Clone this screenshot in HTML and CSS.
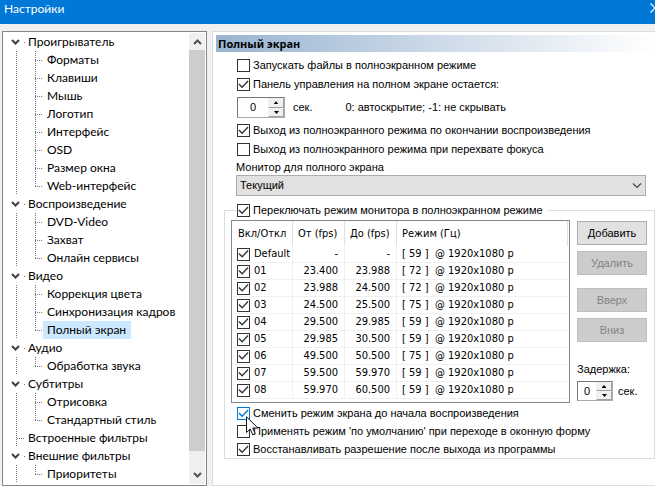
FILE: index.html
```html
<!DOCTYPE html>
<html lang="ru">
<head>
<meta charset="utf-8">
<title>Настройки</title>
<link rel="stylesheet" href="styles.css">
</head>
<body>
<svg class="defs" aria-hidden="true">
  <symbol id="chev" viewBox="0 0 9 6"><path d="M1 1l3.500 3.500L8 1" fill="none" stroke="currentColor" stroke-width="2"/></symbol>
</svg>
<header class="titlebar">
  <span>Настройки</span>
  <button class="close" aria-label="Закрыть"><svg width="10" height="10" viewBox="0 0 10 10"><path d="M.5.5l9 9M9.500.5l-9 9" stroke="#fff" stroke-width="1.200"/></svg></button>
</header>
<main class="window">
  <nav class="tree">
    <ul class="roots">
      <li><a href="#" class="root"><svg class="arrow"><use href="#chev"/></svg>Проигрыватель</a>
        <ul class="kids">
          <li><a href="#">Форматы</a></li><li><a href="#">Клавиши</a></li><li><a href="#">Мышь</a></li><li><a href="#">Логотип</a></li><li><a href="#">Интерфейс</a></li><li><a href="#">OSD</a></li><li><a href="#">Размер окна</a></li><li><a href="#">Web-интерфейс</a></li>
        </ul></li>
      <li><a href="#" class="root"><svg class="arrow"><use href="#chev"/></svg>Воспроизведение</a>
        <ul class="kids">
          <li><a href="#">DVD-Video</a></li><li><a href="#">Захват</a></li><li><a href="#">Онлайн сервисы</a></li>
        </ul></li>
      <li><a href="#" class="root"><svg class="arrow"><use href="#chev"/></svg>Видео</a>
        <ul class="kids">
          <li><a href="#">Коррекция цвета</a></li><li><a href="#">Синхронизация кадров</a></li><li><a href="#" class="selected">Полный экран</a></li>
        </ul></li>
      <li><a href="#" class="root"><svg class="arrow"><use href="#chev"/></svg>Аудио</a>
        <ul class="kids"><li><a href="#">Обработка звука</a></li></ul></li>
      <li><a href="#" class="root"><svg class="arrow"><use href="#chev"/></svg>Субтитры</a>
        <ul class="kids"><li><a href="#">Отрисовка</a></li><li><a href="#">Стандартный стиль</a></li></ul></li>
      <li class="leaf"><a href="#" class="root">Встроенные фильтры</a></li>
      <li><a href="#" class="root"><svg class="arrow"><use href="#chev"/></svg>Внешние фильтры</a>
        <ul class="kids"><li><a href="#">Приоритеты</a></li></ul></li>
    </ul>
    <div class="scroll" aria-hidden="true">
      <span class="scroll-end"><svg class="up"><use href="#chev"/></svg></span>
      <span class="thumb"></span>
      <span class="scroll-end low"><svg><use href="#chev"/></svg></span>
    </div>
  </nav>

  <section class="panel">
    <h1>Полный экран</h1>
    <div class="options">
      <label class="check"><input type="checkbox">Запускать файлы в полноэкранном режиме</label>
      <label class="check"><input type="checkbox" checked>Панель управления на полном экране остается:</label>
      <div class="hide-row">
        <span class="spin wide"><input id="hide" type="text" value="0"><span class="steps"><button aria-label="Больше"></button><button class="down" aria-label="Меньше"></button></span></span>
        <label for="hide">сек.</label>
        <span class="hint">0: автоскрытие; -1: не скрывать</span>
      </div>
      <label class="check"><input type="checkbox" checked>Выход из полноэкранного режима по окончании воспроизведения</label>
      <label class="check"><input type="checkbox">Выход из полноэкранного режима при перехвате фокуса</label>
      <label class="caption" for="monitor">Монитор для полного экрана</label>
      <div class="select"><select id="monitor"><option>Текущий</option></select><svg viewBox="0 0 10 6"><path d="M1 .5l4 4 4-4" fill="none" stroke="#444" stroke-width="1.200"/></svg></div>
    </div>
    <fieldset>
      <legend><label class="check"><input type="checkbox" checked>Переключать режим монитора в полноэкранном режиме</label></legend>
      <div class="modes">
        <div class="list">
          <table>
            <thead><tr><th>Вкл/Откл</th><th>От (fps)</th><th>До (fps)</th><th>Режим (Гц)</th></tr></thead>
            <tbody>
              <tr><td><label class="check"><input type="checkbox" checked>Default</label></td><td>-</td><td>-</td><td><span class="hz">[ 59 ]</span>@ 1920x1080 p</td></tr>
              <tr><td><label class="check"><input type="checkbox" checked>01</label></td><td>23.400</td><td>23.988</td><td><span class="hz">[ 72 ]</span>@ 1920x1080 p</td></tr>
              <tr><td><label class="check"><input type="checkbox" checked>02</label></td><td>23.988</td><td>24.500</td><td><span class="hz">[ 72 ]</span>@ 1920x1080 p</td></tr>
              <tr><td><label class="check"><input type="checkbox" checked>03</label></td><td>24.500</td><td>25.500</td><td><span class="hz">[ 75 ]</span>@ 1920x1080 p</td></tr>
              <tr><td><label class="check"><input type="checkbox" checked>04</label></td><td>29.500</td><td>29.985</td><td><span class="hz">[ 59 ]</span>@ 1920x1080 p</td></tr>
              <tr><td><label class="check"><input type="checkbox" checked>05</label></td><td>29.985</td><td>30.500</td><td><span class="hz">[ 59 ]</span>@ 1920x1080 p</td></tr>
              <tr><td><label class="check"><input type="checkbox" checked>06</label></td><td>49.500</td><td>50.500</td><td><span class="hz">[ 75 ]</span>@ 1920x1080 p</td></tr>
              <tr><td><label class="check"><input type="checkbox" checked>07</label></td><td>59.500</td><td>59.970</td><td><span class="hz">[ 59 ]</span>@ 1920x1080 p</td></tr>
              <tr><td><label class="check"><input type="checkbox" checked>08</label></td><td>59.970</td><td>60.500</td><td><span class="hz">[ 59 ]</span>@ 1920x1080 p</td></tr>
            </tbody>
          </table>
        </div>
        <div class="side">
          <div class="pair"><button class="btn">Добавить</button><button class="btn" disabled>Удалить</button></div>
          <div class="pair"><button class="btn" disabled>Вверх</button><button class="btn" disabled>Вниз</button></div>
          <div class="delay">
            <label for="delay">Задержка:</label>
            <div class="delay-row"><span class="spin"><input id="delay" type="text" value="0"><span class="steps"><button aria-label="Больше"></button><button class="down" aria-label="Меньше"></button></span></span>сек.</div>
          </div>
        </div>
      </div>
      <div class="after">
        <label class="check hot"><input type="checkbox" checked>Сменить режим экрана до начала воспроизведения
          <svg class="cursor" viewBox="0 0 13 20"><path d="M.5.8v15.700l3.700-3.500 2.500 5.800 2.500-1.100-2.500-5.700h5.200z" fill="#fff" stroke="#111"/></svg></label>
        <label class="check"><input type="checkbox">Применять режим 'по умолчанию' при переходе в оконную форму</label>
        <label class="check"><input type="checkbox" checked>Восстанавливать разрешение после выхода из программы</label>
      </div>
    </fieldset>
  </section>
</main>
</body>
</html>
```

FILE: styles.css
```css
* { box-sizing: border-box; }
body {
  margin: 0;
  height: 100vh;
  display: flex;
  flex-direction: column;
  overflow: hidden;
  background: #f0f0f0;
  color: #000;
  font: 11px/15px "Liberation Sans", sans-serif;
  white-space: nowrap;
}
button, input, select { font: inherit; color: inherit; margin: 0; padding: 0; }
a { color: inherit; text-decoration: none; }
ul { list-style: none; margin: 0; padding: 0; }
.defs { position: absolute; width: 0; height: 0; }

.titlebar {
  flex: none;
  display: flex;
  justify-content: space-between;
  height: 24px;
  padding-left: 4px;
  background: #0078d7;
  color: #fff;
  font: 12px/18px Lato, sans-serif;
}
.close { height: 15px; margin-right: -5px; border: 0; background: none; }
.close svg { display: block; }

.window { flex: 1; min-height: 0; display: flex; gap: 5px; padding: 7px 0 0 2px; }

.tree {
  flex: none;
  width: 205px;
  display: flex;
  justify-content: space-between;
  padding: 1px;
  border: 1px solid #828790;
  background: #fff;
  font: 12px/18px Lato, sans-serif;
  overflow: hidden;
}
.roots { padding-left: 7px; }
.roots > li {
  background: repeating-linear-gradient(#777 0 1px, transparent 1px 2px) 5px 18px / 1px 100% no-repeat;
}
.roots > .leaf { background-position: 5px 0; }
.root { display: flex; align-items: center; height: 18px; padding-left: 17px; }
.root::before {
  content: "";
  width: 1px;
  height: 1px;
  margin-right: 3px;
  background: #777;
}
.leaf .root { padding-left: 6px; }
.leaf .root::before {
  width: 8px;
  background: repeating-linear-gradient(90deg, #777 0 1px, transparent 1px 2px);
}
.arrow { order: -1; width: 9px; height: 6px; margin: 0 4px 0 -17px; color: #404040; }
.kids { padding-left: 24px; }
.kids li {
  display: flex;
  align-items: center;
  height: 18px;
  background: repeating-linear-gradient(#777 0 1px, transparent 1px 2px) 0 0 / 1px 100% no-repeat;
}
.kids li:last-child { background-size: 1px 10px; }
.kids li::before {
  content: "";
  width: 8px;
  height: 1px;
  background: repeating-linear-gradient(90deg, #777 0 1px, transparent 1px 2px);
}
.kids a { padding: 0 5px 0 4px; }
.kids .selected { background: #cce8ff; }

.scroll { display: flex; flex-direction: column; width: 16px; background: #f0f0f0; }
.scroll-end { height: 17px; display: flex; align-items: center; justify-content: center; color: #505050; }
.scroll-end.low { height: 33px; padding-top: 21px; align-items: flex-start; }
.scroll-end svg { width: 9px; height: 6px; }
.scroll .up { transform: rotate(180deg); }
.thumb { flex: 1; background: #cdcdcd; }

.panel {
  flex: 1;
  min-width: 0;
  border: solid #dcdcdc;
  border-width: 1px 0 1px 1px;
  padding-top: 3px;
  background: #fff;
}
h1 {
  margin: 0 0 4px 3px;
  padding-left: 2px;
  background: linear-gradient(90deg, #99b4d1, #fff);
  font: bold 11px/17px "Noto Sans", sans-serif;
}
.options { display: flex; flex-direction: column; padding: 0 9px 0 23px; }
.check { display: flex; align-items: center; gap: 3px; height: 19px; margin-left: 1px; }
input[type=checkbox] {
  appearance: none;
  flex: none;
  width: 13px;
  height: 13px;
  border: 1px solid #333;
  background: #fff;
  color: #333;
}
input[type=checkbox]:checked::before {
  content: "";
  display: block;
  width: 11px;
  height: 11px;
  background: currentColor;
  clip-path: polygon(4% 50%, 13% 41%, 38% 66%, 87% 14%, 96% 23%, 38% 84%);
}
.hide-row { display: flex; align-items: center; height: 21px; margin: 3px 1px; }
.hide-row label { margin-left: 8px; }
.hint { margin-left: 33px; }
.spin {
  display: flex;
  width: 36px;
  height: 20px;
  border: 1px solid;
  border-color: #787878 #aaa #aaa #787878;
  background: #fff;
}
.spin.wide { width: 48px; height: 21px; }
.spin input { flex: 1; min-width: 0; border: 0; background: none; text-align: center; }
.steps { display: flex; flex-direction: column; width: 16px; background: #f0f0f0; }
.steps button {
  flex: 1;
  display: flex;
  align-items: center;
  justify-content: center;
  border: 1px solid;
  border-color: #f0f0f0 #a0a0a0 #a0a0a0 #f0f0f0;
  background: #f0f0f0;
}
.steps button::before {
  content: "";
  width: 5px;
  height: 3px;
  background: #000;
  clip-path: polygon(50% 0, 100% 100%, 0 100%);
}
.steps .down::before { transform: rotate(180deg); }
.caption { height: 16px; line-height: 16px; }
.select { position: relative; }
.select select {
  appearance: none;
  display: block;
  width: 100%;
  height: 21px;
  padding: 0 3px;
  border: 1px solid #adadad;
  border-radius: 0;
  background: #e1e1e1;
}
.select svg { position: absolute; right: 4px; top: 8px; width: 10px; height: 6px; pointer-events: none; }

fieldset {
  min-width: 0;
  margin: 8px 0 0 11px;
  padding: 3px 6px 0;
  border: 1px solid #dcdcdc;
}
legend { margin-left: 5px; padding: 0 5px 0 0; }
legend .check { height: 13px; }
.modes { display: flex; gap: 7px; }
.list { flex: 1; min-width: 0; height: 183px; padding: 0 1px; border: 1px solid #828790; }
table {
  width: 100%;
  table-layout: fixed;
  border-collapse: separate;
  border-spacing: 0;
  font-family: "DejaVu Sans Condensed", "DejaVu Sans", sans-serif;
}
th, td { padding: 0; border: solid #f0f0f0; border-width: 0 1px 1px 0; }
th { height: 25px; padding-left: 5px; border-bottom-color: #fff; border-right-color: #e0e0e0; font-weight: normal; text-align: left; }
th:nth-child(1) { width: 60px; }
th:nth-child(2), th:nth-child(3) { width: 52px; }
td { height: 17px; line-height: 16px; }
td .check { height: 16px; margin-left: 4px; gap: 4px; }
td:nth-child(2), td:nth-child(3) { padding-right: 6px; text-align: right; }
td:nth-child(4) { padding-left: 5px; border-right: 0; }
.hz { display: inline-block; width: 33px; }
.side { display: flex; flex-direction: column; gap: 13px; width: 71px; padding-top: 1px; }
.pair { display: grid; gap: 6px; padding-right: 1px; }
.btn { height: 24px; border: 1px solid #adadad; background: #e1e1e1; }
.btn:disabled { border-color: #bfbfbf; background: #ccc; color: #838383; }
.delay { margin-top: 7px; }
.delay-row { display: flex; align-items: center; gap: 5px; margin-top: 4px; }
.after { display: grid; gap: 1px; margin: 2px 0 0 5px; }
.after .check { height: 17px; }
.hot { position: relative; }
.hot input[type=checkbox] { border-color: #0078d7; color: #0078d7; }
.cursor { position: absolute; left: 9px; top: 11px; width: 13px; height: 20px; z-index: 1; pointer-events: none; }
```
